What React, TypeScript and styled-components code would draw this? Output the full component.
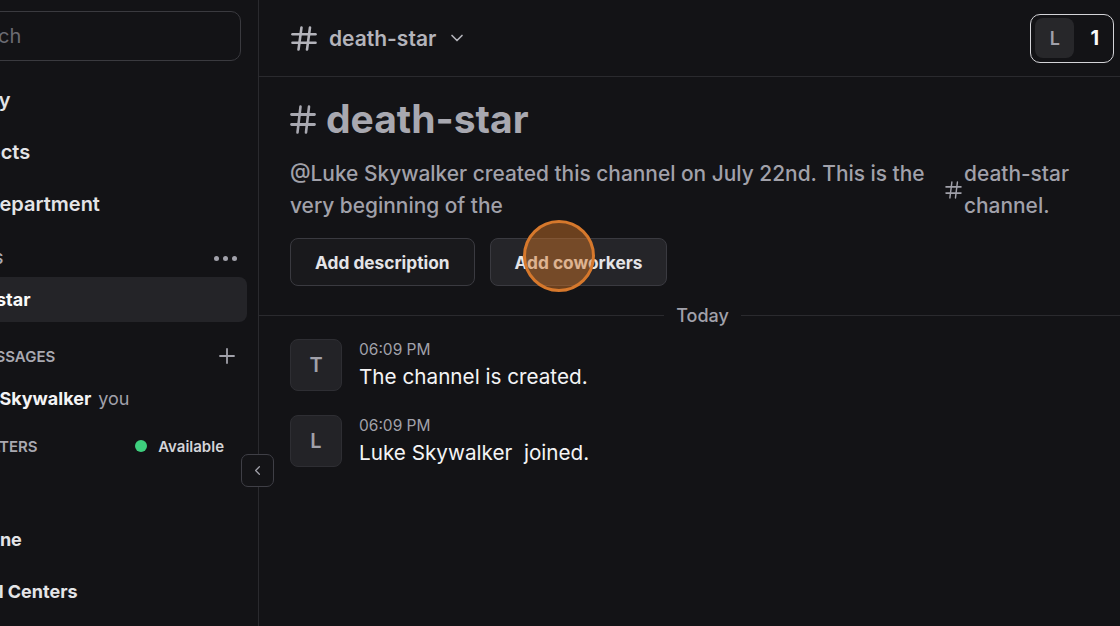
import React from 'react';
import styled, { createGlobalStyle } from 'styled-components';
import { ChevronDown, ChevronLeft, Plus } from 'lucide-react';

const GlobalStyle = createGlobalStyle`
  html, body {
    margin: 0;
    background: #131316;
  }
  * {
    box-sizing: border-box;
  }
`;

const Page = styled.div`
  position: relative;
  display: flex;
  width: 100vw;
  height: 100vh;
  overflow: hidden;
  background: #131316;
  font-family: Inter, 'Noto Sans', sans-serif;
  color: #e4e4e7;
`;

/* ---------- sidebar ---------- */

const Sidebar = styled.aside`
  position: relative;
  flex: 0 0 259px;
  border-right: 1px solid #2a2a2e;
`;

const SidebarInner = styled.div`
  height: 100%;
  overflow: hidden;
  padding-top: 11px;
  display: flex;
  flex-direction: column;
`;

const Clipped = styled.span<{ $clip: number }>`
  margin-left: ${p => -p.$clip}px;
  white-space: nowrap;
`;

const SearchBox = styled.div`
  height: 50px;
  margin: 0 17px 0 -60px;
  padding-left: 14px;
  border: 1px solid #3a3a3f;
  border-radius: 10px;
  display: flex;
  align-items: center;
  font-size: 20px;
  color: #6b6b72;
  white-space: nowrap;
`;

const NavList = styled.nav`
  margin-top: 13px;
  display: flex;
  flex-direction: column;
`;

const NavItem = styled.div`
  height: 52px;
  display: flex;
  align-items: center;
  font-size: 20px;
  font-weight: 600;
  color: #e4e4e7;
`;

const SectionHeader = styled.div<{ $top: number }>`
  height: 36px;
  margin-top: ${p => p.$top}px;
  padding-right: 19px;
  display: flex;
  align-items: center;
  justify-content: space-between;
  font-size: 15px;
  font-weight: 600;
  text-transform: uppercase;
  color: #a9a9b1;
  svg {
    color: #a1a1aa;
  }
`;

const Dots = styled.span`
  display: flex;
  gap: 4px;
  margin-right: 2px;
  i {
    width: 5px;
    height: 5px;
    border-radius: 50%;
    background: #a1a1aa;
  }
`;

const ActiveItem = styled.div`
  height: 45px;
  margin: 1px 11px 0 -20px;
  padding-left: 20px;
  display: flex;
  align-items: center;
  background: #242428;
  border-radius: 8px;
  font-size: 18px;
  font-weight: 700;
  color: #fafafa;
`;

const UserRow = styled.div`
  height: 44px;
  margin-top: 2px;
  display: flex;
  align-items: center;
  font-size: 18px;
  font-weight: 700;
  color: #f4f4f5;
`;

const YouTag = styled.span`
  margin-left: 7px;
  font-weight: 400;
  color: #a1a1aa;
`;

const Status = styled.div`
  display: flex;
  align-items: center;
  gap: 11px;
  margin-right: 15px;
  font-size: 15px;
  font-weight: 600;
  text-transform: none;
  color: #d4d4d8;
`;

const StatusDot = styled.span`
  width: 12px;
  height: 12px;
  border-radius: 50%;
  background: #3ecf7e;
`;

const BottomList = styled.div`
  margin-top: 49px;
  display: flex;
  flex-direction: column;
`;

const BottomItem = styled.div`
  height: 52px;
  display: flex;
  align-items: center;
  font-size: 18px;
  font-weight: 700;
  color: #e4e4e7;
`;

const CollapseButton = styled.button`
  position: absolute;
  left: 241px;
  top: 454px;
  width: 33px;
  height: 33px;
  padding: 0;
  display: flex;
  align-items: center;
  justify-content: center;
  border: 1px solid #3f3f46;
  border-radius: 7px;
  background: #141417;
  color: #a1a1aa;
  z-index: 2;
`;

/* ---------- main ---------- */

const Main = styled.main`
  flex: 1;
  min-width: 0;
  display: flex;
  flex-direction: column;
`;

const Header = styled.header`
  height: 77px;
  flex: 0 0 77px;
  padding: 0 6px 0 32px;
  border-bottom: 1px solid #2a2a2e;
  display: flex;
  align-items: center;
  justify-content: space-between;
`;

const ChannelName = styled.div`
  display: flex;
  align-items: center;
  gap: 12px;
  font-size: 21px;
  font-weight: 600;
  color: #b4b4bb;
  svg.chev {
    margin-left: -1px;
    color: #b4b4bb;
  }
`;

const MemberGroup = styled.div`
  height: 49px;
  padding: 4px;
  border: 1.5px solid #d4d4d8;
  border-radius: 10px;
  display: flex;
  align-items: center;
`;

const MemberAvatar = styled.div`
  width: 39px;
  height: 40px;
  border-radius: 8px;
  background: #27272a;
  display: flex;
  align-items: center;
  justify-content: center;
  font-size: 18px;
  font-weight: 600;
  color: #a1a1aa;
`;

const MemberCount = styled.span`
  margin: 0 10px 0 16px;
  font-size: 20px;
  font-weight: 700;
  color: #fafafa;
`;

const Intro = styled.section`
  padding: 0 30px 0 31px;
`;

const Title = styled.h1`
  margin: 18px 0 0;
  display: flex;
  align-items: center;
  gap: 10px;
  font-size: 39px;
  line-height: 48px;
  font-weight: 700;
  color: #a8a8b0;
`;

const Description = styled.div`
  margin-top: 15px;
  display: flex;
  font-size: 20.9px;
  line-height: 32px;
  font-weight: 500;
  color: #a1a1aa;
`;

const DescText = styled.p`
  flex: 0 0 650px;
  margin: 0;
`;

const ChannelRef = styled.div`
  margin-left: 5px;
  display: flex;
  align-items: center;
  gap: 2px;
  svg {
    flex-shrink: 0;
  }
`;

const Actions = styled.div`
  margin-top: 16px;
  display: flex;
  gap: 15px;
`;

const ActionButton = styled.button<{ $tone: string }>`
  height: 48px;
  padding: 0 24px;
  border: 1px solid #3a3a40;
  border-radius: 8px;
  background: ${p => p.$tone};
  font-family: inherit;
  font-size: 17.3px;
  font-weight: 700;
  color: #e4e4e7;
`;

const Divider = styled.div`
  margin-top: 19px;
  height: 20px;
  display: flex;
  align-items: center;
`;

const DividerLine = styled.span<{ $grow: number }>`
  flex: ${p => p.$grow} 1 0;
  height: 1px;
  background: #2a2a2e;
`;

const DividerLabel = styled.span`
  margin: 0 12px;
  font-size: 18px;
  font-weight: 500;
  color: #a1a1aa;
`;

const MessageList = styled.div`
  margin-top: 14px;
  padding-left: 31px;
  display: flex;
  flex-direction: column;
  gap: 24px;
`;

const Message = styled.div`
  display: flex;
  gap: 17px;
`;

const Avatar = styled.div`
  flex: 0 0 52px;
  height: 52px;
  border-radius: 8px;
  background: #232327;
  border: 1px solid #2e2e33;
  display: flex;
  align-items: center;
  justify-content: center;
  font-size: 20px;
  font-weight: 600;
  color: #a1a1aa;
`;

const MessageBody = styled.div`
  display: flex;
  flex-direction: column;
`;

const Time = styled.span`
  margin-top: 1px;
  font-size: 15.5px;
  line-height: 20px;
  color: #a1a1aa;
`;

const Text = styled.span`
  margin-top: 3px;
  font-size: 20.7px;
  line-height: 28px;
  color: #f4f4f5;
`;

// click highlight from the screen recording, drawn over the button
const ClickRipple = styled.div`
  position: absolute;
  left: 523px;
  top: 220px;
  width: 72px;
  height: 72px;
  border-radius: 50%;
  border: 3px solid #d6782c;
  background: rgba(214, 120, 40, 0.45);
  pointer-events: none;
`;

const HashIcon = ({ w, h, stroke = 2.4 }: { w: number; h: number; stroke?: number }) => (
  <svg width={w} height={h} viewBox="0 0 26 26" preserveAspectRatio="none" fill="none"
    stroke="currentColor" strokeWidth={stroke} strokeLinecap="round">
    <line x1="1.5" y1="8.5" x2="24.5" y2="8.5" />
    <line x1="1.5" y1="17.5" x2="24.5" y2="17.5" />
    <line x1="10.5" y1="1.5" x2="7.5" y2="24.5" />
    <line x1="19" y1="1.5" x2="16" y2="24.5" />
  </svg>
);

const messages = [
  { id: 1, initial: 'T', time: '06:09 PM', text: 'The channel is created.' },
  { id: 2, initial: 'L', time: '06:09 PM', text: 'Luke Skywalker\u00a0 joined.' },
];

const App = () => (
  <>
    <GlobalStyle />
    <Page>
      <Sidebar>
        <SidebarInner>
          <SearchBox>Search</SearchBox>
          <NavList>
            <NavItem><Clipped $clip={64}>Activity</Clipped></NavItem>
            <NavItem><Clipped $clip={49}>Projects</Clipped></NavItem>
            <NavItem><Clipped $clip={15}>Department</Clipped></NavItem>
          </NavList>
          <SectionHeader $top={10}>
            <Clipped $clip={80}>Channels</Clipped>
            <Dots><i /><i /><i /></Dots>
          </SectionHeader>
          <ActiveItem><Clipped $clip={63}>death-star</Clipped></ActiveItem>
          <SectionHeader $top={16}>
            <Clipped $clip={86}>Direct messages</Clipped>
            <Plus size={24} strokeWidth={1.8} />
          </SectionHeader>
          <UserRow>
            <Clipped $clip={47}>Luke Skywalker</Clipped>
            <YouTag>you</YouTag>
          </UserRow>
          <SectionHeader $top={8}>
            <Clipped $clip={21}>Filters</Clipped>
            <Status><StatusDot />Available</Status>
          </SectionHeader>
          <BottomList>
            <BottomItem><Clipped $clip={34}>Phone</Clipped></BottomItem>
            <BottomItem><Clipped $clip={30}>Call Centers</Clipped></BottomItem>
          </BottomList>
        </SidebarInner>
        <CollapseButton><ChevronLeft size={15} strokeWidth={2} /></CollapseButton>
      </Sidebar>

      <Main>
        <Header>
          <ChannelName>
            <HashIcon w={26} h={25} stroke={2.6} />
            death-star
            <ChevronDown className="chev" size={20} strokeWidth={2} />
          </ChannelName>
          <MemberGroup>
            <MemberAvatar>L</MemberAvatar>
            <MemberCount>1</MemberCount>
          </MemberGroup>
        </Header>

        <Intro>
          <Title>
            <HashIcon w={26} h={29} stroke={2.6} />
            death-star
          </Title>
          <Description>
            <DescText>
              @Luke Skywalker created this channel on July 22nd. This is the very beginning of the
            </DescText>
            <ChannelRef>
              <HashIcon w={17} h={18} stroke={2.2} />
              <span>death-star channel.</span>
            </ChannelRef>
          </Description>
          <Actions>
            <ActionButton $tone="#19191c">Add description</ActionButton>
            <ActionButton $tone="#252529">Add coworkers</ActionButton>
          </Actions>
        </Intro>

        <Divider>
          <DividerLine $grow={405} />
          <DividerLabel>Today</DividerLabel>
          <DividerLine $grow={379} />
        </Divider>

        <MessageList>
          {messages.map(m => (
            <Message key={m.id}>
              <Avatar>{m.initial}</Avatar>
              <MessageBody>
                <Time>{m.time}</Time>
                <Text>{m.text}</Text>
              </MessageBody>
            </Message>
          ))}
        </MessageList>
      </Main>

      <ClickRipple />
    </Page>
  </>
);

export default App;
